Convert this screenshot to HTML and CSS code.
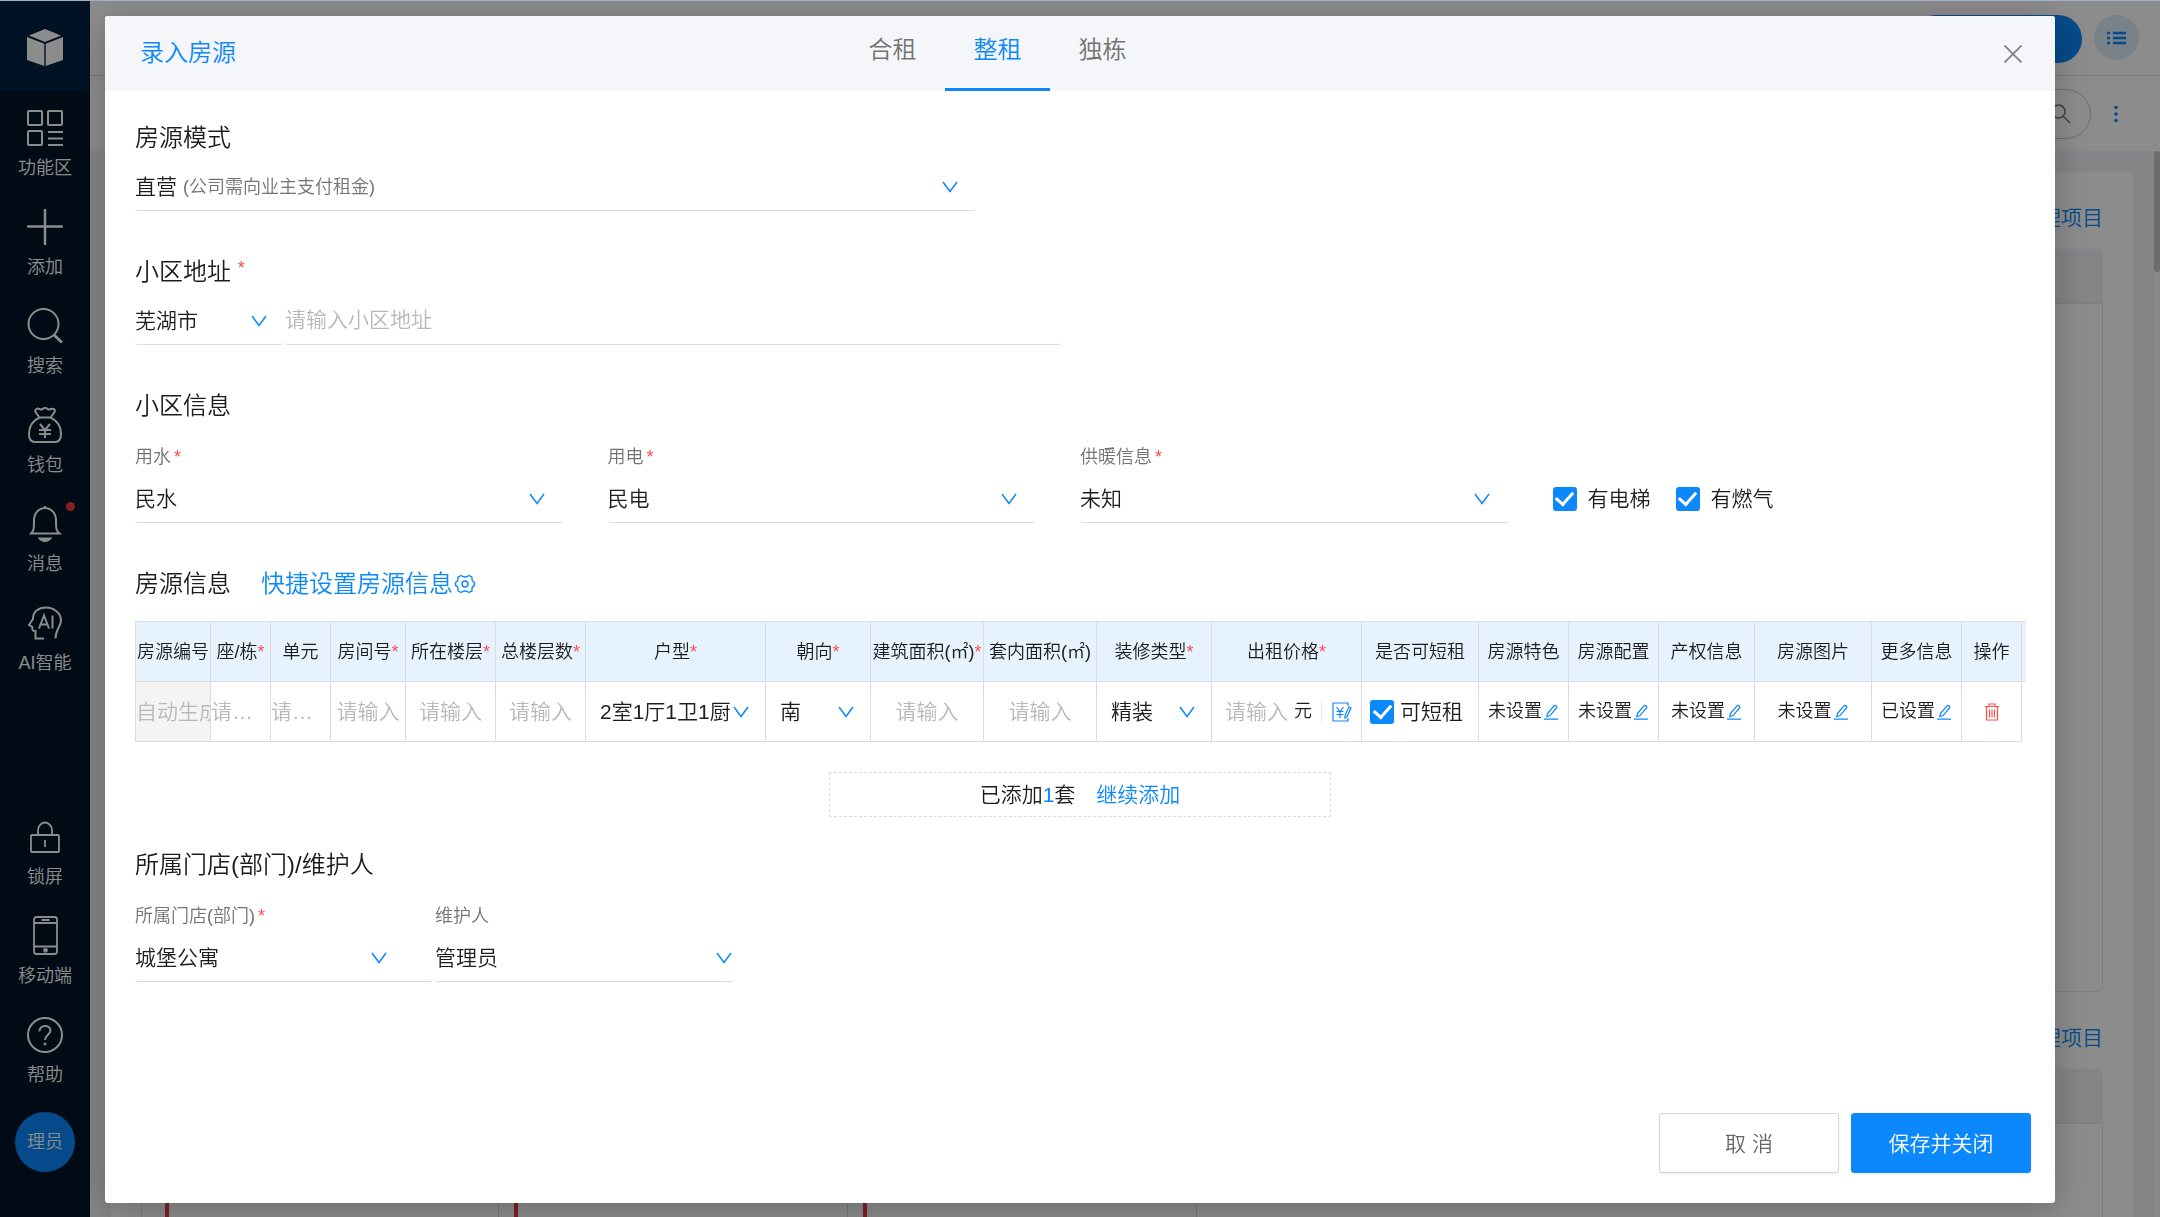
FILE: index.html
```
<!DOCTYPE html>
<html lang="zh-CN">
<head>
<meta charset="utf-8">
<meta name="viewport" content="width=device-width, initial-scale=1">
<title>录入房源</title>
<link rel="stylesheet" href="styles.css">
</head>
<body>
<svg class="sprite" aria-hidden="true">
  <symbol id="chevron" viewBox="0 0 16 12"><path d="M1 1l7 9.500L15 1" fill="none" stroke="currentColor" stroke-width="1.500"/></symbol>
  <symbol id="edit" viewBox="0 0 16 16"><path d="M1 15.200h14M4.500 9.500L11 1.800a1.300 1.300 0 0 1 1.900-.1l.5.5a1.300 1.300 0 0 1 .1 1.800L7 11.600l-3.200 1.100z" fill="none" stroke="currentColor" stroke-width="1.200"/></symbol>
</svg>

<div class="app">
  <nav class="sidebar">
    <a class="logo" href="#" aria-label="首页">
      <svg width="38" height="38" viewBox="0 0 38 38" fill="currentColor"><path d="M19 0l16 6.600L19 13 3 6.600z"/><path d="M1 8l17.300 6.800V37L1 31z"/><path d="M37 8l-17.300 6.800V37L37 31z"/></svg>
    </a>
    <a class="nav-item" href="#">
      <svg width="36" height="36" viewBox="0 0 36 36" fill="none" stroke="currentColor" stroke-width="2"><rect x="1" y="1" width="14" height="14" rx="1"/><rect x="21" y="1" width="14" height="14" rx="1"/><rect x="1" y="21" width="14" height="14" rx="1"/><path d="M21 22h15M21 28.500h15M21 35h15"/></svg>
      <span>功能区</span>
    </a>
    <a class="nav-item" href="#">
      <svg width="36" height="36" viewBox="0 0 36 36" fill="none" stroke="currentColor" stroke-width="2.500" stroke-linecap="round"><path d="M18 1v34M1 17.500h34"/></svg>
      <span>添加</span>
    </a>
    <a class="nav-item" href="#">
      <svg width="36" height="36" viewBox="0 0 36 36" fill="none" stroke="currentColor" stroke-width="2"><circle cx="16.500" cy="16" r="15"/><path d="M27 27l8 7.500" stroke-width="3"/></svg>
      <span>搜索</span>
    </a>
    <a class="nav-item" href="#">
      <svg width="36" height="36" viewBox="0 0 36 36" fill="none" stroke="currentColor" stroke-width="2"><path d="M12.500 10.500L8.500 5c-1-3 2-4 4-3 2 .8 3 .3 3.500-.2 1.300-1 3-1 4.200 0 .8.6 2 1 3.500.2 2.500-1 5 .5 3.800 3L23.500 10.500C29 13 34 18 34 27c0 6-2 8-6 8H8c-4 0-6-2-6-8 0-9 5-14 10.500-16.500zh11"/><path d="M13 17l5 6 5-6M12 23h12M12 27h12M18 23v8"/></svg>
      <span>钱包</span>
    </a>
    <a class="nav-item" href="#">
      <svg width="36" height="36" viewBox="0 0 36 36" fill="none" stroke="currentColor" stroke-width="2"><path d="M4 27.500c3-3 3-5 3-13C7 7 12 2 18 2s11 5 11 12.500c0 8 0 10 3.500 13z"/><path d="M18 0v2"/><path d="M10.500 31.500h15C23 35 20.500 36 18 36s-5-1-7.500-4.500z" fill="currentColor" stroke="none"/></svg>
      <span>消息</span>
      <i class="dot"></i>
    </a>
    <a class="nav-item" href="#">
      <svg width="36" height="36" viewBox="0 0 36 36" fill="none" stroke="currentColor" stroke-width="2"><path d="M17 33.500H8.500V26c-3 .3-3.500-1-3.200-4L2 20l4-6C6 6 12 2.500 19 2.500c8 0 15 5.500 15 13 0 6-5.500 9-5.500 18"/><path d="M12 23.500l5-13 5 13M13.500 19.500h7M25.500 10.500v13"/></svg>
      <span>AI智能</span>
    </a>
    <div class="nav-bottom">
      <a class="nav-item" href="#">
        <svg width="36" height="36" viewBox="0 0 36 36" fill="none" stroke="currentColor" stroke-width="1.800"><rect x="4" y="16" width="28" height="17" rx="1"/><path d="M11 16v-4.500a7 8 0 0 1 14 0V16M18 21v7"/></svg>
        <span>锁屏</span>
      </a>
      <a class="nav-item" href="#">
        <svg width="36" height="36" viewBox="0 2 36 36" overflow="visible" fill="none" stroke="currentColor" stroke-width="1.800"><rect x="7" y="1" width="23" height="37" rx="2.500"/><path d="M7 7h23M7 30.500h23M14.500 4h8"/><circle cx="18.500" cy="34.300" r="1.500" fill="currentColor"/></svg>
        <span>移动端</span>
      </a>
      <a class="nav-item" href="#">
        <svg width="36" height="36" viewBox="0 0 36 36" fill="none" stroke="currentColor" stroke-width="2"><circle cx="18" cy="18" r="17"/><path d="M12.500 14.500c0-7.500 11-7 11-1 0 4-5.500 4.500-5.500 9.500"/><circle cx="18" cy="27" r=".6"/></svg>
        <span>帮助</span>
      </a>
      <a class="avatar" href="#">理员</a>
    </div>
  </nav>

  <main class="page">
    <header class="page-head">
      <button class="pill" type="button" aria-label="录入"></button>
      <button class="round" type="button" aria-label="列表">
        <svg width="20" height="14" viewBox="0 0 20 14" stroke="currentColor" stroke-width="2.500"><path d="M6 2h13M6 7h13M6 12h13M0 2h3M0 7h3M0 12h3"/></svg>
      </button>
    </header>
    <div class="toolbar">
      <button class="search" type="button" aria-label="查找">
        <svg width="20" height="20" viewBox="0 0 20 20" fill="none" stroke="currentColor" stroke-width="1.500"><circle cx="7.500" cy="7.500" r="6.500"/><path d="M12.500 12.500l6.500 6.500"/></svg>
      </button>
      <button class="more" type="button" aria-label="更多">
        <svg width="6" height="18" viewBox="0 0 6 18" fill="currentColor"><circle cx="3" cy="2.500" r="1.800"/><circle cx="3" cy="9" r="1.800"/><circle cx="3" cy="15.500" r="1.800"/></svg>
      </button>
    </div>
    <div class="scroller">
      <div class="board">
        <section class="panel panel-main">
          <div class="panel-title"><a href="#">管理项目</a></div>
          <div class="panel-head"></div>
          <div class="panel-body"></div>
        </section>
        <section class="panel">
          <div class="panel-title"><a href="#">管理项目</a></div>
          <div class="panel-head"></div>
          <div class="panel-body lanes"><div class="lane"></div><div class="lane"></div><div class="lane"></div></div>
        </section>
      </div>
      <div class="track"><div class="thumb"></div></div>
    </div>
  </main>
</div>

<div class="overlay">
  <div class="modal" role="dialog" aria-labelledby="dlg-title">
    <header class="modal-head">
      <h1 id="dlg-title">录入房源</h1>
      <div class="tabs" role="tablist">
        <button type="button" role="tab" class="tab">合租</button>
        <button type="button" role="tab" class="tab active" aria-selected="true">整租</button>
        <button type="button" role="tab" class="tab">独栋</button>
      </div>
      <button class="close" type="button" aria-label="关闭">
        <svg width="18" height="18" viewBox="0 0 18 18" stroke="currentColor" stroke-width="1.800"><path d="M.5.500l17 17M17.500.500l-17 17"/></svg>
      </button>
    </header>

    <form class="modal-body">
      <section class="block">
        <h2><label for="mode">房源模式</label></h2>
        <div class="control mode">
          <select id="mode"><option>直营</option></select>
          <span class="hint">(公司需向业主支付租金)</span>
          <svg class="chev"><use href="#chevron"/></svg>
        </div>
      </section>

      <section class="block">
        <h2><label for="address">小区地址</label> <em>*</em></h2>
        <div class="address">
          <div class="control city">
            <select aria-label="城市"><option>芜湖市</option></select>
            <svg class="chev"><use href="#chevron"/></svg>
          </div>
          <div class="control street"><input id="address" type="text" placeholder="请输入小区地址"></div>
        </div>
      </section>

      <section class="block">
        <h2>小区信息</h2>
        <div class="fields quarter">
          <div class="field">
            <label for="water">用水<em>*</em></label>
            <div class="control"><select id="water"><option>民水</option></select><svg class="chev"><use href="#chevron"/></svg></div>
          </div>
          <div class="field">
            <label for="power">用电<em>*</em></label>
            <div class="control"><select id="power"><option>民电</option></select><svg class="chev"><use href="#chevron"/></svg></div>
          </div>
          <div class="field">
            <label for="heat">供暖信息<em>*</em></label>
            <div class="control"><select id="heat"><option>未知</option></select><svg class="chev"><use href="#chevron"/></svg></div>
          </div>
          <div class="checks">
            <label class="check"><input type="checkbox" checked>有电梯</label>
            <label class="check"><input type="checkbox" checked>有燃气</label>
          </div>
        </div>
      </section>

      <section class="block">
        <div class="title-row">
          <h2>房源信息</h2>
          <a class="quick" href="#">快捷设置房源信息<svg width="22" height="20" viewBox="0 0 22 20" fill="none" stroke="currentColor" stroke-width="1.400" stroke-linejoin="round"><path d="M7 1.500Q11 4.500 15 1.500L18 3.200Q17.500 7.500 20.500 8.500V11.500Q17.500 12.500 18 16.800L15 18.500Q11 15.500 7 18.500L4 16.800Q4.500 12.500 1.500 11.500V8.500Q4.500 7.500 4 3.200Z"/><circle cx="11" cy="10" r="3"/></svg></a>
        </div>
        <table class="grid">
          <colgroup>
            <col class="w75"><col class="w60"><col class="w60"><col class="w75"><col class="w90"><col class="w90"><col class="w180"><col class="w105"><col class="w113"><col class="w113"><col class="w115"><col class="w150"><col class="w117"><col class="w90"><col class="w90"><col class="w96"><col class="w117"><col class="w90"><col class="w60"><col class="w4">
          </colgroup>
          <thead>
            <tr>
              <th>房源编号</th><th>座/栋<em>*</em></th><th>单元</th><th>房间号<em>*</em></th><th>所在楼层<em>*</em></th><th>总楼层数<em>*</em></th><th>户型<em>*</em></th><th>朝向<em>*</em></th><th>建筑面积(㎡)<em>*</em></th><th>套内面积(㎡)</th><th>装修类型<em>*</em></th><th>出租价格<em>*</em></th><th>是否可短租</th><th>房源特色</th><th>房源配置</th><th>产权信息</th><th>房源图片</th><th>更多信息</th><th>操作</th><th class="gutter"></th>
            </tr>
          </thead>
          <tbody>
            <tr>
              <td class="auto"><input type="text" placeholder="自动生成" aria-label="房源编号" disabled></td>
              <td class="short"><input type="text" placeholder="请输入" aria-label="座/栋"></td>
              <td class="short"><input type="text" placeholder="请输入" aria-label="单元"></td>
              <td><input type="text" placeholder="请输入" aria-label="房间号"></td>
              <td><input type="text" placeholder="请输入" aria-label="所在楼层"></td>
              <td><input type="text" placeholder="请输入" aria-label="总楼层数"></td>
              <td><div class="pick"><select aria-label="户型"><option>2室1厅1卫1厨</option></select><svg class="chev"><use href="#chevron"/></svg></div></td>
              <td><div class="pick"><select aria-label="朝向"><option>南</option></select><svg class="chev"><use href="#chevron"/></svg></div></td>
              <td><input type="text" placeholder="请输入" aria-label="建筑面积"></td>
              <td><input type="text" placeholder="请输入" aria-label="套内面积"></td>
              <td><div class="pick"><select aria-label="装修类型"><option>精装</option></select><svg class="chev"><use href="#chevron"/></svg></div></td>
              <td>
                <div class="price">
                  <input type="text" placeholder="请输入" aria-label="出租价格"><span>元</span>
                  <button type="button" aria-label="价格设置"><svg width="20" height="20" viewBox="0 0 20 20" fill="none" stroke="currentColor" stroke-width="1.200"><path d="M16 4V1H1v18h15v-3M4.500 5L8 9.500 11.500 5M4.500 9.500h7M4.500 12.500h7M8 9.500V16"/><path d="M13 13.500L17 5l2 1-4 8.500-2 1.500z"/></svg></button>
                </div>
              </td>
              <td><label class="check slim"><input type="checkbox" checked>可短租</label></td>
              <td><button class="set" type="button">未设置<svg><use href="#edit"/></svg></button></td>
              <td><button class="set" type="button">未设置<svg><use href="#edit"/></svg></button></td>
              <td><button class="set" type="button">未设置<svg><use href="#edit"/></svg></button></td>
              <td><button class="set" type="button">未设置<svg><use href="#edit"/></svg></button></td>
              <td><button class="set" type="button">已设置<svg><use href="#edit"/></svg></button></td>
              <td><button class="remove" type="button" aria-label="删除"><svg width="14" height="18" viewBox="0 0 14 18" fill="none" stroke="currentColor" stroke-width="1.200"><path d="M0 3.500h14M4 3.500V1h6v2.500M1.500 3.500V17h11V3.500M4.500 6.500v8M7 6.500v8M9.500 6.500v8"/></svg></button></td>
            </tr>
          </tbody>
        </table>
        <div class="added"><span>已添加<b>1</b>套</span><a href="#">继续添加</a></div>
      </section>

      <section class="block last">
        <h2>所属门店(部门)/维护人</h2>
        <div class="fields pair">
          <div class="field">
            <label for="dept">所属门店(部门)<em>*</em></label>
            <div class="control dept"><select id="dept"><option>城堡公寓</option></select><svg class="chev"><use href="#chevron"/></svg></div>
          </div>
          <div class="field">
            <label for="keeper">维护人</label>
            <div class="control keeper"><select id="keeper"><option>管理员</option></select><svg class="chev"><use href="#chevron"/></svg></div>
          </div>
        </div>
      </section>
    </form>

    <footer class="modal-foot">
      <button class="btn" type="button">取 消</button>
      <button class="btn primary" type="button">保存并关闭</button>
    </footer>
  </div>
</div>
</body>
</html>
```
FILE: styles.css
```
:root {
  --blue: #0a88fc;
  --red: #ff4d4f;
  --line: #dcdcdc;
  --muted: #b8b8b8;
}

* { box-sizing: border-box; }

body {
  margin: 0;
  font: 350 18px/27px "Liberation Sans", "Noto Sans CJK SC", sans-serif;
  color: #1c1c1c;
}

a { color: var(--blue); text-decoration: none; }
h1, h2 { margin: 0; font-weight: 350; font-size: 24px; line-height: 36px; }
em { font-style: normal; color: var(--red); }
svg { display: block; flex: none; }
.sprite { position: absolute; width: 0; height: 0; }

button, input, select {
  font: inherit;
  color: inherit;
  margin: 0;
  padding: 0;
  border: 0;
  background: none;
  border-radius: 0;
  outline: none;
}
select { appearance: none; width: 100%; }
::placeholder { color: var(--muted); opacity: 1; }

/* Page behind the dialog */
.app { display: flex; height: 100vh; overflow: hidden; }

.sidebar {
  display: flex;
  flex-direction: column;
  flex: none;
  width: 90px;
  background: #001529;
}
.sidebar a { color: #fff; }
.logo {
  display: flex;
  align-items: center;
  justify-content: center;
  height: 91px;
  padding-top: 4px;
  background: #002140;
}
.nav-item {
  position: relative;
  display: flex;
  flex-direction: column;
  align-items: center;
  height: 99px;
  padding-top: 19px;
  gap: 9px;
  white-space: nowrap;
}
.dot {
  position: absolute;
  top: 15px;
  right: 15px;
  width: 9px;
  height: 9px;
  border-radius: 50%;
  background: #f53a3e;
}
.nav-bottom { margin-top: auto; padding-bottom: 45px; }
.avatar {
  display: flex;
  align-items: center;
  justify-content: center;
  width: 60px;
  height: 60px;
  margin: 15px 15px 0;
  border-radius: 50%;
  background: var(--blue);
}

.page { display: flex; flex-direction: column; flex: 1; min-width: 0; background: #fff; }
.page-head {
  display: flex;
  justify-content: flex-end;
  gap: 12px;
  height: 76px;
  padding: 15px 21px 0 0;
  border-bottom: 1px solid #dcdcdc;
}
.pill { width: 170px; height: 48px; border-radius: 24px; background: var(--blue); }
.round {
  display: flex;
  align-items: center;
  justify-content: center;
  width: 45px;
  height: 45px;
  border-radius: 50%;
  background: #dcebfa;
  color: var(--blue);
}
.toolbar {
  display: flex;
  align-items: center;
  justify-content: flex-end;
  gap: 22px;
  height: 75px;
  padding-right: 41px;
}
.search {
  display: flex;
  align-items: center;
  justify-content: flex-end;
  width: 300px;
  height: 50px;
  padding-right: 19px;
  border: 1px solid #c4c4c4;
  border-radius: 25px;
  color: #777;
}
.more { color: var(--blue); }
.scroller { display: flex; flex: 1; min-height: 0; background: #f0f2f5; }
.board { flex: 1; margin: 21px 21px 0; padding: 0 30px; background: #fff; overflow: hidden; }
.track { width: 6px; background: #fafafa; }
.thumb { height: 121px; border-radius: 3px; background: #c6c6c6; }
.panel-title { height: 77px; padding-top: 32px; font-size: 21px; text-align: right; }
.panel-head { height: 54px; border-radius: 6px 6px 0 0; background: #f0f2f5; }
.panel-body { height: 689px; border: 1px solid #e4e4e4; border-radius: 0 0 6px 6px; }
.lanes { display: flex; padding-left: 8px; }
.lane { width: 349px; padding-left: 15px; border-right: 1px solid #d8d8d8; }
.lane::before { content: ""; display: block; width: 4px; height: 100%; background: #e23b3f; }

/* Dialog */
.overlay {
  position: fixed;
  inset: 0;
  padding: 15px 105px 14px;
  border-top: 1px solid #a3aecb;
  background: rgba(0, 0, 0, .45);
  overflow: auto;
}
.modal {
  display: flex;
  flex-direction: column;
  min-height: 100%;
  border-radius: 3px;
  background: #fff;
  box-shadow: 0 6px 36px rgba(0, 0, 0, .25);
}
.modal-head {
  display: grid;
  grid-template-columns: 735fr 315px 900fr;
  height: 75px;
  border-radius: 3px 3px 0 0;
  background: #f5f6f9;
}
.modal-head h1 { padding: 19px 0 0 35px; color: var(--blue); }
.tabs { display: flex; }
.tab {
  flex: 1;
  padding-bottom: 6px;
  border-bottom: 3px solid transparent;
  font-size: 24px;
  color: #737373;
}
.tab.active { color: var(--blue); border-color: var(--blue); }
.close { justify-self: end; align-self: center; margin-right: 33px; color: #808080; }

.modal-body { flex: 1; padding: 29px 30px 0; }
.block { margin-bottom: 43px; }
.block.last { margin-bottom: 30px; }
h2 em { font-size: 18px; vertical-align: 6px; line-height: 18px; }

.control, .pick { display: grid; align-items: center; }
.control > *, .pick > * { grid-area: 1 / 1; }
.control {
  height: 45px;
  padding-bottom: 2px;
  border-bottom: 1px solid var(--line);
  border-radius: 3px;
  font-size: 21px;
}
.control input, .control select { width: 100%; height: 42px; padding-bottom: 2px; }
.chev { width: 16px; height: 12px; margin-right: 16px; justify-self: end; color: var(--blue); pointer-events: none; }
.hint { margin-left: 48px; font-size: 18px; color: #737373; pointer-events: none; }

.mode { width: 44.5%; margin-top: 10px; }
.mode .chev { margin-right: 18px; }
.address { display: flex; gap: 2px; width: 49%; margin-top: 10px; }
.city { flex: 0 0 148px; }
.city .chev { margin-right: 16px; }
.street { flex: 1; }

.fields { display: grid; margin-top: 20px; }
.quarter { grid-template-columns: repeat(4, 1fr); }
.pair { grid-template-columns: 300px 300px; }
.field > label { display: block; margin-bottom: 7px; color: #737373; }
.field > label em { margin-left: 3px; }
.quarter .control { margin-right: 45px; }
.quarter .chev { margin-right: 18px; }
.dept { margin-right: 2px; }
.dept .chev { margin-right: 46px; }
.keeper .chev { margin-right: 3px; }

.checks { display: flex; align-items: flex-end; gap: 25px; padding-bottom: 11px; }
.check { display: flex; align-items: center; gap: 11px; font-size: 21px; white-space: nowrap; }
.check input {
  appearance: none;
  display: grid;
  place-items: center;
  flex: none;
  width: 24px;
  height: 24px;
  border-radius: 3px;
  background: var(--blue);
}
.check input::before {
  content: "";
  width: 8px;
  height: 14px;
  margin-top: -4px;
  border: solid #fff;
  border-width: 0 3px 3px 0;
  transform: rotate(42deg);
}
.check input:not(:checked) { background: #fff; border: 1px solid var(--line); }

.title-row { display: flex; gap: 30px; margin-bottom: 19px; }
.quick { display: flex; align-items: center; gap: 1px; font-size: 24px; line-height: 36px; }

.grid { width: 100%; table-layout: fixed; border-collapse: collapse; }
.grid th, .grid td { height: 60px; padding: 0; border: 1px solid var(--line); text-align: center; white-space: nowrap; }
.grid th { padding-top: 2px; background: #e6f2fe; font-weight: 350; }
.grid .gutter { border-right: 0; }
.grid input[type="text"] { display: block; width: 100%; height: 58px; font-size: 21px; text-align: center; }
.grid input:placeholder-shown { text-overflow: ellipsis; }
.grid .short input, .grid .auto input { text-align: left; }
.grid .auto { background: #f4f4f4; }
.grid .auto input { text-overflow: clip; }
.w4 { width: 4px; }
.w60 { width: 60px; }
.w75 { width: 75px; }
.w90 { width: 90px; }
.w96 { width: 96px; }
.w105 { width: 105px; }
.w113 { width: 113px; }
.w115 { width: 115px; }
.w117 { width: 117px; }
.w150 { width: 150px; }
.w180 { width: 180px; }

.pick { font-size: 21px; }
.pick select { height: 42px; padding-left: 14px; }
.pick .chev { margin-right: 16px; }
.price { display: flex; align-items: center; padding-left: 13px; }
.price input[type="text"] { width: 64px; text-align: left; }
.price span { margin: 0 9px 0 5px; }
.price button { display: flex; padding-left: 10px; border-left: 1px solid #e8e8e8; color: var(--blue); }
.slim { gap: 6px; padding-left: 8px; }
.set { display: inline-flex; align-items: center; gap: 1px; vertical-align: middle; }
.set svg { width: 16px; height: 16px; color: var(--blue); }
.remove { color: var(--red); vertical-align: middle; }

.added {
  display: flex;
  align-items: center;
  justify-content: center;
  gap: 21px;
  width: 502px;
  height: 45px;
  margin: 30px auto -13px;
  border: 1px dashed var(--line);
  font-size: 21px;
}
.added b { font-weight: 350; color: var(--blue); }

.modal-foot { display: flex; justify-content: flex-end; gap: 12px; padding: 0 24px 30px; }
.btn {
  width: 180px;
  height: 60px;
  border: 1px solid #d4d4d4;
  border-radius: 3px;
  background: #fff;
  box-shadow: 0 2px 3px rgba(0, 0, 0, .05);
  font-size: 21px;
  color: #666;
}
.btn.primary { border-color: var(--blue); background: var(--blue); color: #fff; }
```
